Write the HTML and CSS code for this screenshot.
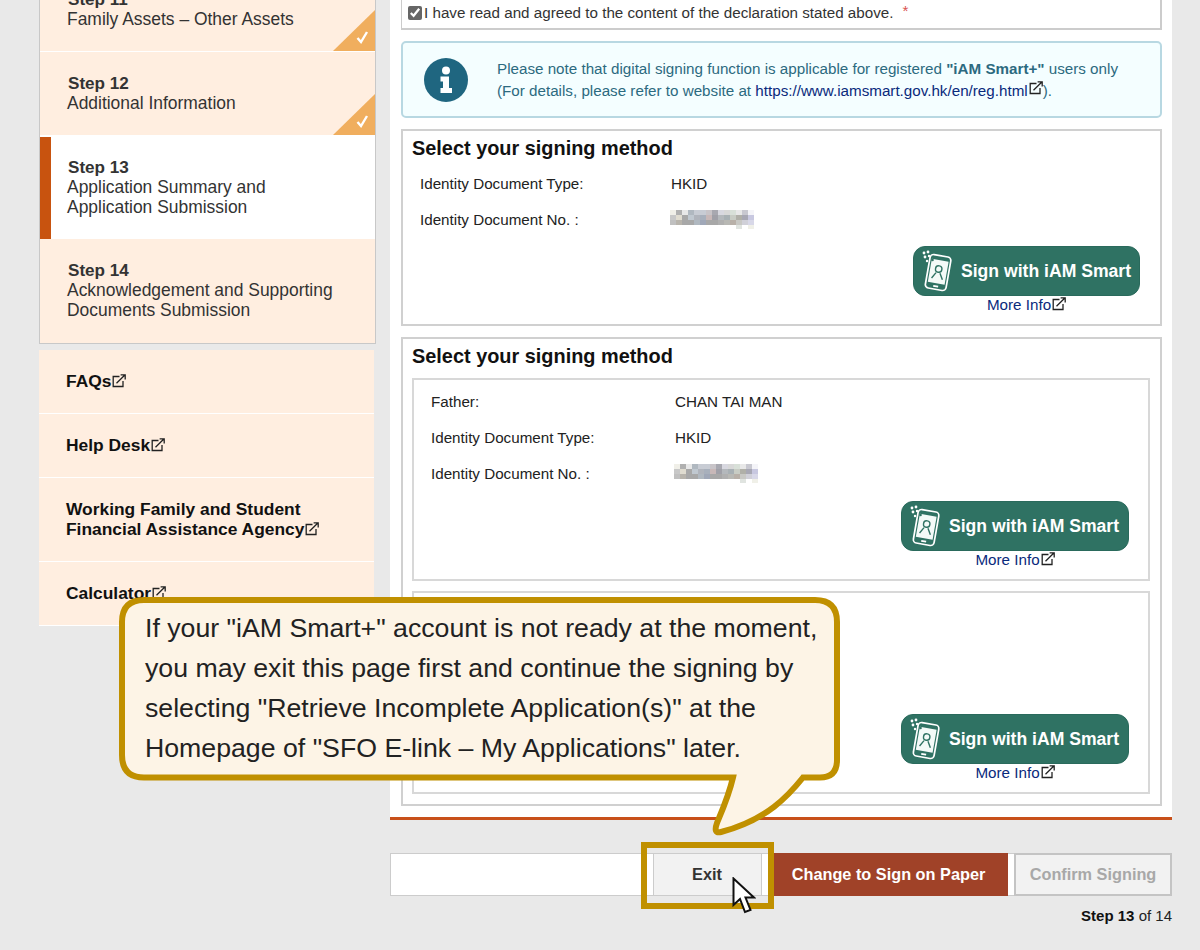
FILE: index.html
```html
<!DOCTYPE html>
<html lang="en">
<head>
<meta charset="utf-8">
<title>Application Submission</title>
<link rel="stylesheet" href="styles.css">
</head>
<body>
<svg class="defs" width="0" height="0" aria-hidden="true">
  <symbol id="ext" viewBox="0 0 14 14">
    <path d="M7.5 2.5H1.2V12.5H11V7" fill="none" stroke="currentColor" stroke-width="1.3"/>
    <path d="M4.5 9.2L12.6 1.2M8.6 0.8H13.2V5.4" fill="none" stroke="currentColor" stroke-width="1.3"/>
  </symbol>
  <symbol id="check" viewBox="0 0 42 41">
    <path d="M24.5 28L28 32L34 22" fill="none" stroke="#fff" stroke-width="2.4"/>
  </symbol>
  <symbol id="phone" viewBox="0 0 36 42">
    <g fill="#fff">
      <circle cx="2" cy="3" r="1.4"/><circle cx="6" cy="2" r="1.4"/><circle cx="3" cy="7" r="1.4"/><circle cx="7" cy="6" r="1.2"/><circle cx="5" cy="11" r="1.2"/>
    </g>
    <g transform="rotate(10 16 23)">
      <rect x="5.5" y="5.5" width="21" height="34" rx="3.5" fill="none" stroke="#fff" stroke-width="1.7"/>
      <rect x="7.5" y="10" width="17" height="23.5" fill="#f4faf8"/>
      <rect x="13.5" y="35.5" width="5" height="1.8" fill="#fff"/>
      <circle cx="16" cy="19" r="3.2" fill="none" stroke="#2f7263" stroke-width="1.4"/>
      <path d="M10.5 29L14 23M21.5 29L18 23" fill="none" stroke="#2f7263" stroke-width="1.4"/>
    </g>
    <circle cx="10.5" cy="10" r="1.3" fill="#2f7263"/>
  </symbol>
  <symbol id="mosaic" viewBox="0 0 84 20" >
    <g shape-rendering="crispEdges">
      <rect x="0" y="1" width="6" height="5" fill="#f0efe8"/><rect x="6" y="1" width="6" height="5" fill="#b0b0b0"/><rect x="12" y="1" width="6" height="5" fill="#e8e8e8"/><rect x="18" y="1" width="6" height="5" fill="#b0b8c0"/><rect x="24" y="1" width="6" height="5" fill="#c8ccd4"/><rect x="30" y="1" width="6" height="5" fill="#c8ccd4"/><rect x="36" y="1" width="6" height="5" fill="#c8c4c8"/><rect x="42" y="1" width="6" height="5" fill="#a8a8b0"/><rect x="48" y="1" width="6" height="5" fill="#d8d8e0"/><rect x="54" y="1" width="6" height="5" fill="#d8d8d8"/><rect x="60" y="1" width="6" height="5" fill="#d8e0d8"/><rect x="66" y="1" width="6" height="5" fill="#e8e8e8"/><rect x="72" y="1" width="6" height="5" fill="#c8c8d0"/><rect x="78" y="1" width="6" height="5" fill="#f4f4f8"/>
      <rect x="0" y="6" width="6" height="5" fill="#c8c8c8"/><rect x="6" y="6" width="6" height="5" fill="#e0dcd0"/><rect x="12" y="6" width="6" height="5" fill="#a8a8a8"/><rect x="18" y="6" width="6" height="5" fill="#c0c8d0"/><rect x="24" y="6" width="6" height="5" fill="#b0b4bc"/><rect x="30" y="6" width="6" height="5" fill="#a8b0bc"/><rect x="36" y="6" width="6" height="5" fill="#c8b8b8"/><rect x="42" y="6" width="6" height="5" fill="#a0a0a8"/><rect x="48" y="6" width="6" height="5" fill="#b4b8bc"/><rect x="54" y="6" width="6" height="5" fill="#a8b0b4"/><rect x="60" y="6" width="6" height="5" fill="#c8ccc4"/><rect x="66" y="6" width="6" height="5" fill="#b0b0a8"/><rect x="72" y="6" width="6" height="5" fill="#a8a8b4"/><rect x="78" y="6" width="6" height="5" fill="#c8c8e0"/>
      <rect x="0" y="11" width="6" height="5" fill="#c0c0c0"/><rect x="6" y="11" width="6" height="5" fill="#b8b4ac"/><rect x="12" y="11" width="6" height="5" fill="#a8a8a8"/><rect x="18" y="11" width="6" height="5" fill="#a8a8a8"/><rect x="24" y="11" width="6" height="5" fill="#b0b8c0"/><rect x="30" y="11" width="6" height="5" fill="#a0a8b8"/><rect x="36" y="11" width="6" height="5" fill="#a8a8a8"/><rect x="42" y="11" width="6" height="5" fill="#a8a8a8"/><rect x="48" y="11" width="6" height="5" fill="#b0b0b0"/><rect x="54" y="11" width="6" height="5" fill="#b8b8b4"/><rect x="60" y="11" width="6" height="5" fill="#b8b0a8"/><rect x="66" y="11" width="6" height="5" fill="#c8c8c4"/><rect x="72" y="11" width="6" height="5" fill="#d0d0d8"/><rect x="78" y="11" width="6" height="5" fill="#d8d8e8"/>
      <rect x="66" y="16" width="6" height="4" fill="#e0e4e0"/><rect x="78" y="16" width="6" height="4" fill="#f0f0e8"/>
    </g>
  </symbol>
</svg>

<div class="page">
  <aside class="side">
    <nav class="steps">
      <div class="step done">
        <div class="step-no">Step 11</div>
        <div class="step-name">Family Assets – Other Assets</div>
        <span class="tick"><svg class="tick-mark"><use href="#check"/></svg></span>
      </div>
      <div class="step done">
        <div class="step-no">Step 12</div>
        <div class="step-name">Additional Information</div>
        <span class="tick"><svg class="tick-mark"><use href="#check"/></svg></span>
      </div>
      <div class="step active">
        <div class="step-no">Step 13</div>
        <div class="step-name">Application Summary and<br>Application Submission</div>
      </div>
      <div class="step last">
        <div class="step-no">Step 14</div>
        <div class="step-name">Acknowledgement and Supporting<br>Documents Submission</div>
      </div>
    </nav>
    <nav class="links">
      <div class="link-row">FAQs<svg class="ext"><use href="#ext"/></svg></div>
      <div class="link-row">Help Desk<svg class="ext"><use href="#ext"/></svg></div>
      <div class="link-row">Working Family and Student<br>Financial Assistance Agency<svg class="ext"><use href="#ext"/></svg></div>
      <div class="link-row">Calculator<svg class="ext"><use href="#ext"/></svg></div>
    </nav>
  </aside>

  <main class="main">
    <section class="panel">
      <div class="declare">
        <label class="agree"><input type="checkbox" checked>I have read and agreed to the content of the declaration stated above.<span class="req">*</span></label>
      </div>

      <div class="notice">
        <svg class="info" viewBox="0 0 44 44"><circle cx="22" cy="22" r="22" fill="#1f6680"/><circle cx="22" cy="12.5" r="4" fill="#fff"/><path d="M16.5 18.5H25V30H28V35H16.5V30H19V23.5H16.5Z" fill="#fff"/></svg>
        <p class="notice-text">Please note that digital signing function is applicable for registered <b>"iAM Smart+"</b> users only<br>(For details, please refer to website at <a class="link" href="#">https://www.iamsmart.gov.hk/en/reg.html</a><svg class="ext raised"><use href="#ext"/></svg>).</p>
      </div>

      <div class="signbox">
        <h2 class="sign-title">Select your signing method</h2>
        <div class="rows">
          <div class="row"><span class="label">Identity Document Type:</span><span>HKID</span></div>
          <div class="row"><span class="label">Identity Document No. :</span><svg class="mosaic"><use href="#mosaic"/></svg></div>
        </div>
        <div class="sign-action">
          <button class="iam"><svg class="phone"><use href="#phone"/></svg>Sign with iAM Smart</button>
          <a class="more" href="#">More Info<svg class="ext"><use href="#ext"/></svg></a>
        </div>
      </div>

      <div class="signbox outer">
        <h2 class="sign-title">Select your signing method</h2>
        <div class="person">
          <div class="rows">
            <div class="row"><span class="label">Father:</span><span>CHAN TAI MAN</span></div>
            <div class="row"><span class="label">Identity Document Type:</span><span>HKID</span></div>
            <div class="row"><span class="label">Identity Document No. :</span><svg class="mosaic"><use href="#mosaic"/></svg></div>
          </div>
          <div class="sign-action">
            <button class="iam"><svg class="phone"><use href="#phone"/></svg>Sign with iAM Smart</button>
            <a class="more" href="#">More Info<svg class="ext"><use href="#ext"/></svg></a>
          </div>
        </div>
        <div class="person second">
          <div class="sign-action">
            <button class="iam"><svg class="phone"><use href="#phone"/></svg>Sign with iAM Smart</button>
            <a class="more" href="#">More Info<svg class="ext"><use href="#ext"/></svg></a>
          </div>
        </div>
      </div>
    </section>

    <div class="actions">
      <button class="btn exit">Exit</button>
      <button class="btn change">Change to Sign on Paper</button>
      <button class="btn confirm">Confirm Signing</button>
    </div>
    <div class="progress"><b>Step 13</b> of 14</div>
  </main>
</div>

<div class="callout">
  <svg class="bubble" viewBox="0 0 730 250">
    <path d="M27 5H698Q720 5 720 27V165Q720 182.5 703 182.5H686C672 200 650 225 604 237Q596 239 600 228C605 216 612 200 616 182.5H27Q5 182.5 5 160V27Q5 5 27 5Z" fill="#fdf4e6" stroke="#c09000" stroke-width="6"/>
  </svg>
  <p class="callout-text">If your "iAM Smart+" account is not ready at the moment,<br>you may exit this page first and continue the signing by<br>selecting "Retrieve Incomplete Application(s)" at the<br>Homepage of "SFO E-link – My Applications" later.</p>
</div>
<div class="highlight"></div>
<svg class="cursor" viewBox="0 0 24 38"><path d="M1.5 1.5V28L8 22L13 35L18.5 33L13.5 20.5H22Z" fill="#fff" stroke="#111" stroke-width="2"/></svg>
</body>
</html>
```

FILE: styles.css
```css
html, body { margin: 0; padding: 0; }
body {
  width: 1200px;
  height: 950px;
  overflow: hidden;
  position: relative;
  background: #e9e9e9;
  font-family: "Liberation Sans", Arial, sans-serif;
  font-size: 15.2px;
  color: #333;
}
.defs { position: absolute; }
.page {
  display: flex;
  gap: 14px;
  margin-top: -32px;
  padding-left: 39px;
}

/* sidebar */
.side { width: 337px; flex: none; }
.steps {
  border: 1px solid #c8c8c8;
  border-top: 0;
  background: #ffeee0;
}
.step {
  position: relative;
  padding: 21px 0 22px 27px;
  font-size: 17.45px;
  line-height: 20px;
  color: #333;
  background: #ffeee0;
}
.done { border-bottom: 1px solid #fff; }
.last { padding-top: 20px; padding-bottom: 23px; margin-top: 1px; }
.step-no { font-weight: bold; font-size: 17.1px; padding: 1px 0 0 1px; margin-bottom: -1px; }
.active { background: #fff; padding-top: 21px; }
.active::before {
  content: "";
  position: absolute;
  left: 0; top: 1px; bottom: 0;
  width: 11px;
  background: #c8530f;
}
.tick {
  position: absolute;
  right: 0; bottom: 0;
  width: 42px; height: 41px;
  background: #f0ae5e;
  clip-path: polygon(100% 0, 100% 100%, 0 100%);
}
.tick-mark { display: block; width: 42px; height: 41px; }
.links { margin-top: 6px; width: 335px; }
.link-row {
  padding: 21px 0 22px 27px;
  background: #ffeee0;
  border-bottom: 1px solid #fff;
  font-weight: bold;
  font-size: 17.4px;
  line-height: 20px;
  color: #111;
}
.ext { width: 14px; height: 14px; color: #222; vertical-align: 3px; margin-block: -4px; margin-left: 1px; }

/* main */
.main { width: 782px; flex: none; }
.panel {
  background: #fff;
  border-bottom: 3px solid #c8501a;
  padding: 0 10px 11px 11px;
  display: flex;
  flex-direction: column;
  gap: 11px;
}
.declare {
  height: 62px;
  box-sizing: border-box;
  border: 1px solid #ccc;
  border-width: 0 2px 2px 1px;
  display: flex;
  align-items: flex-end;
  padding: 0 0 7px 6px;
}
.agree { display: flex; align-items: center; }
.agree input { margin: 0 2px 0 0; width: 14px; height: 14px; accent-color: #666; }
.req { color: #d9534f; margin-left: 9px; position: relative; top: -2px; }
.notice {
  display: flex;
  align-items: center;
  height: 77px;
  box-sizing: border-box;
  background: #f4feff;
  border: 2px solid #b8d8e2;
  border-radius: 5px;
  padding-left: 21px;
}
.info { width: 44px; height: 44px; flex: none; margin-right: 29px; }
.notice-text { margin: 0; line-height: 22px; color: #2c6a80; }
.link { color: #0a2a7c; text-decoration: none; }
.raised { vertical-align: 5px; }
.signbox {
  border: 2px solid #d0d0d0;
  padding: 6px 10px 0 9px;
  height: 197px;
  box-sizing: border-box;
}
.outer { height: auto; padding-bottom: 10px; }
.sign-title { margin: 0; font-size: 19.9px; line-height: 22px; color: #111; font-weight: bold; }
.rows { padding: 6px 0 0 8px; }
.row { display: flex; align-items: center; height: 36px; color: #222; }
.label { width: 251px; flex: none; }
.person .label { width: 244px; }
.mosaic { width: 84px; height: 20px; margin-left: -1px; }
.sign-action {
  margin: 9px 10px 0 auto;
  width: 227px;
  display: flex;
  flex-direction: column;
  align-items: center;
}
.iam {
  width: 100%; height: 50px;
  background: #2f7263;
  border: 1px solid #2a6a5c;
  border-radius: 12px;
  color: #fff;
  font: bold 17.6px "Liberation Sans", Arial, sans-serif;
  display: flex;
  align-items: center;
  padding: 0 0 0 8px;
  white-space: nowrap;
}
.phone { width: 36px; height: 42px; margin-right: 3px; flex: none; }
.more { color: #0a2a7c; line-height: 18px; text-decoration: none; }
.person {
  border: 2px solid #d8d8d8;
  margin-top: 11px;
  height: 203px;
  box-sizing: border-box;
  padding-top: 3px;
}
.person .rows { padding: 0 0 0 17px; }
.person .sign-action { margin: 10px 19px 0 auto; width: 228px; }
.person.second { margin-top: 10px; padding-top: 121px; }
.person.second .sign-action { margin-top: 0; }

/* actions */
.actions {
  margin-top: 33px;
  height: 43px;
  box-sizing: border-box;
  background: #fff;
  border: 1px solid #ccc;
  border-right: 0;
  display: flex;
  justify-content: flex-end;
}
.btn {
  border: 0;
  font: bold 16.3px "Liberation Sans", Arial, sans-serif;
  height: 43px;
  margin-top: -1px;
  padding: 0;
}
.exit { width: 109px; background: #f2f2f2; border: 1px solid #ccc; color: #333; margin-right: 11px; padding-right: 1px; }
.change { width: 235px; background: #a04228; color: #fff; padding-right: 4px; }
.confirm { width: 158px; margin-left: 6px; background: #f2f2f2; border: 2px solid #c4c4c4; color: #a8a8a8; }
.progress { text-align: right; margin-top: 12px; font-size: 15px; line-height: 16px; color: #222; }
.progress b { color: #111; }

/* overlays */
.callout { position: absolute; left: 117px; top: 595px; width: 730px; height: 250px; }
.bubble { display: block; width: 730px; height: 250px; }
.callout-text {
  position: absolute;
  left: 28px; top: 13px;
  margin: 0;
  font-size: 26.7px;
  line-height: 40px;
  color: #222;
  white-space: nowrap;
}
.highlight {
  position: absolute;
  left: 641px; top: 842px;
  width: 133px; height: 67px;
  box-sizing: border-box;
  border: 6px solid #c09000;
}
.cursor { position: absolute; left: 732px; top: 877px; width: 24px; height: 38px; }
```
